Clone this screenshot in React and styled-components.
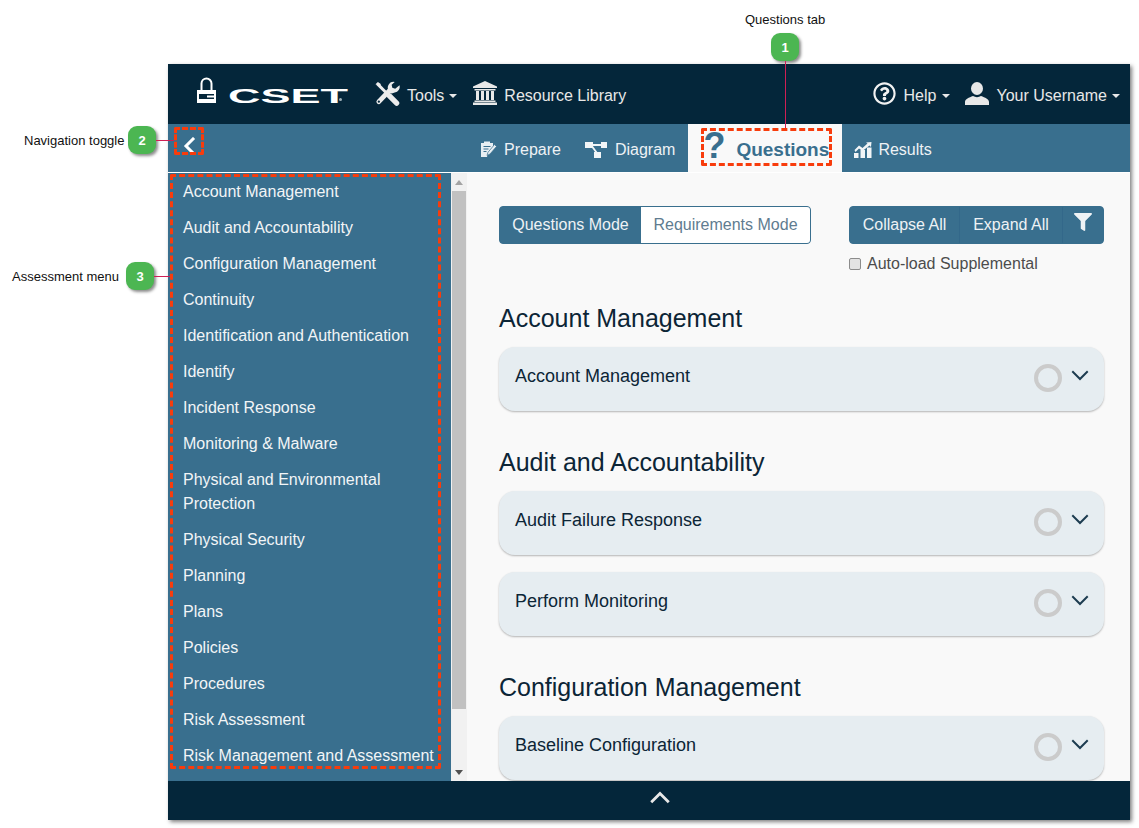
import React from 'react'
import styled, { createGlobalStyle } from 'styled-components'
import { FaRegQuestionCircle, FaFilter } from 'react-icons/fa'

const GlobalStyle = createGlobalStyle`
  html, body {
    margin: 0;
    padding: 0;
    background: #fff;
    font-family: "Liberation Sans", Arial, sans-serif;
  }
`

const navy = '#04263a'
const steel = '#396f8e'
const paper = '#f9f9f9'

const Page = styled.div`
  position: relative;
  width: 1139px;
  height: 828px;
  padding: 64px 9px 8px 168px;
  box-sizing: border-box;
  overflow: hidden;
`
const Frame = styled.div`
  display: flex;
  flex-direction: column;
  height: 756px;
  box-shadow: 2px 2px 4px rgba(0, 0, 0, .5);
`
const Header = styled.header`
  display: flex;
  align-items: center;
  height: 60px;
  flex: none;
  padding: 4px 10px 0 28px;
  box-sizing: border-box;
  background: ${navy};
  color: #e8e8e8;
  font-size: 16px;

  svg {
    margin-top: -6px;
  }
`
const Logo = styled.div`
  position: relative;
  display: flex;
  align-items: center;
  width: 179px;
  flex: none;
  color: #fff;

  svg {
    margin-top: -13px;
  }
`
const LogoWord = styled.span`
  display: inline-block;
  margin-left: 11px;
  font-size: 20px;
  line-height: 20px;
  font-weight: 700;
  transform: scale(2.25, 1);
  transform-origin: left center;
  white-space: nowrap;
`
const LogoDot = styled.i`
  position: absolute;
  left: 143px;
  top: 12px;
  width: 3px;
  height: 3px;
  border-radius: 50%;
  background: #9fb0ba;
`
const HeaderLink = styled.a`
  display: flex;
  align-items: center;
  gap: ${p => p.$gap || 7}px;
  margin-left: ${p => p.$left || 0}px;
  color: inherit;
  white-space: nowrap;
`
const Caret = styled.i`
  width: 0;
  height: 0;
  margin-left: -2px;
  border-left: 4.5px solid transparent;
  border-right: 4.5px solid transparent;
  border-top: 4.5px solid currentColor;
`
const Spacer = styled.div`
  flex: 1;
`
const TabBar = styled.nav`
  display: flex;
  height: 49px;
  flex: none;
  background: ${steel};
  color: #eef2f5;
  font-size: 16px;
`
const Toggle = styled.div`
  display: flex;
  align-items: center;
  width: 300px;
  flex: none;
  padding: 0 0 6px 14px;
  box-sizing: border-box;
`
const Tab = styled.a`
  display: flex;
  align-items: center;
  gap: ${p => p.$gap || 7}px;
  padding: 2px 12px 0;
  white-space: nowrap;
`
const ActiveTab = styled(Tab)`
  width: 154px;
  box-sizing: border-box;
  margin-left: 1px;
  padding: 2px 0 0 15px;
  gap: 11px;
  background: ${paper};
  color: ${steel};
  font-size: 19px;
  font-weight: 700;
`
const BigMark = styled.span`
  font-size: 36px;
  line-height: 36px;
  margin-top: -7px;
`
const Body = styled.div`
  display: flex;
  flex: 1;
  min-height: 0;
  border-top: 1px solid #fff;
  margin-top: -1px;
  background: ${paper};
`
const Sidebar = styled.aside`
  width: 283px;
  flex: none;
  overflow: hidden;
  background: ${steel};
`
const MenuItem = styled.div`
  padding: 7px 15px 5px;
  color: #f2f5f7;
  font-size: 16px;
  line-height: 24px;
`
const Scrollbar = styled.div`
  display: flex;
  flex-direction: column;
  align-items: center;
  width: 16px;
  flex: none;
  background: #f1f1f1;
`
const ScrollArrow = styled.i`
  width: 0;
  height: 0;
  margin: ${p => (p.$up ? '7px 0 6px' : '6px 0')};
  border-left: 4px solid transparent;
  border-right: 4px solid transparent;
  ${p => (p.$up ? 'border-bottom: 5px solid #a3a3a3;' : 'border-top: 5px solid #505050;')}
`
const ScrollThumb = styled.div`
  width: 14px;
  height: 518px;
  margin-bottom: auto;
  background: #c1c1c1;
`
const Main = styled.main`
  flex: 1;
  min-width: 0;
  overflow: hidden;
  padding: 33px 26px 0 32px;
`
const Toolbar = styled.div`
  display: flex;
  justify-content: space-between;
  align-items: flex-start;
`
const BtnGroup = styled.div`
  display: flex;
  height: 38px;
  border-radius: 4px;
  overflow: hidden;
  background: ${steel};
  border: 1px solid ${steel};
  box-sizing: border-box;
`
const Btn = styled.button`
  display: flex;
  align-items: center;
  justify-content: center;
  width: ${p => p.$w}px;
  padding: 0;
  border: 0;
  border-left: ${p => (p.$divider ? '1px solid #33688a' : '0')};
  background: ${p => (p.$outline ? '#fff' : steel)};
  color: ${p => (p.$outline ? '#5f7c90' : '#eef2f5')};
  font: 16px "Liberation Sans", Arial, sans-serif;
`
const FilterGlyph = styled(FaFilter)`
  margin-top: -7px;
`
const RightTools = styled.div`
  width: 255px;
`
const CheckRow = styled.label`
  display: flex;
  align-items: center;
  gap: 6px;
  height: 18px;
  margin-top: 11px;
  color: #4c4c4c;
  font-size: 16px;
  white-space: nowrap;
`
const Check = styled.input`
  appearance: none;
  width: 12px;
  height: 12px;
  margin: 0;
  border: 1px solid #8c8c8c;
  border-radius: 2px;
  background: #e3e3e3;
`
const Section = styled.section`
  margin-top: ${p => p.$top}px;
`
const Heading = styled.h2`
  margin: 0 0 14px;
  color: #0c2536;
  font-size: 25px;
  font-weight: 400;
  line-height: 30px;
`
const Panel = styled.div`
  display: flex;
  align-items: flex-start;
  height: 64px;
  margin-top: 17px;
  padding: 17px 15px 0 16px;
  box-sizing: border-box;
  border-radius: 16px;
  background: #e6edf1;
  box-shadow: 0 1px 2px rgba(0, 0, 0, .28);
  color: #0c2536;
  font-size: 18px;
  line-height: 24px;

  h2 + & {
    margin-top: 0;
  }

  svg {
    margin-top: 2px;
  }
`
const PanelTitle = styled.span`
  flex: 1;
`
const Ring = styled.i`
  width: 28px;
  height: 28px;
  margin-right: 9px;
  border: 4px solid #cbcbcb;
  border-radius: 50%;
  box-sizing: border-box;
`
const Footer = styled.footer`
  display: flex;
  align-items: center;
  justify-content: center;
  height: 39px;
  flex: none;
  padding: 0 0 5px 22px;
  box-sizing: border-box;
  background: ${navy};
`

/* annotation layer, drawn over the screenshot */
const Badge = styled.div`
  position: absolute;
  left: ${p => p.$x}px;
  top: ${p => p.$y}px;
  display: flex;
  align-items: center;
  justify-content: center;
  width: 28px;
  height: 28px;
  border-radius: 9px;
  background: #4cb652;
  box-shadow: 2px 2px 3px rgba(0, 0, 0, .45);
  color: #fff;
  font-size: 13px;
  font-weight: 700;
`
const Label = styled.span`
  position: absolute;
  left: ${p => p.$x}px;
  top: ${p => p.$y}px;
  color: #111;
  font-size: 13px;
  line-height: 14px;
  white-space: nowrap;
`
const Leader = styled.i`
  position: absolute;
  left: ${p => p.$x}px;
  top: ${p => p.$y}px;
  width: ${p => p.$w}px;
  height: ${p => p.$h}px;
  background: #cf1f55;
`
const Marker = styled.div`
  position: absolute;
  left: ${p => p.$x}px;
  top: ${p => p.$y}px;
  width: ${p => p.$w}px;
  height: ${p => p.$h}px;
  box-sizing: border-box;
  border: 3px dashed #f83c0c;
  border-radius: 2px;
`

const LockIcon = () => (
  <svg width="21" height="26" viewBox="0 0 21 26">
    <path d="M5.500 13V6.500a5 5 0 0 1 10 0V13" fill="none" stroke="#fff" strokeWidth="2" />
    <path fillRule="evenodd" fill="#fff" d="M1 13h19v13H1zM3 17v5h15v-1.500h-7v-2h7V17z" />
  </svg>
)
const ToolsIcon = () => (
  <svg width="25" height="25" viewBox="0 0 26 25">
    <path d="M2.500 2.500 14 14" fill="none" stroke="#ececec" strokeWidth="3" />
    <path d="M.5 3 3 .5l3 2-.5 3z" fill="#ececec" />
    <path d="M15 15l7.500 7.500" fill="none" stroke="#ececec" strokeWidth="5.500" strokeLinecap="round" />
    <path d="M4 21 15.500 9" fill="none" stroke="#ececec" strokeWidth="5" strokeLinecap="round" />
    <path fill="#ececec" d="M20.500.5a6 6 0 0 0-7 7.500L14 11.500l3.500 1 3-1a6 6 0 0 0 5-7.500l-4.500 3.500-3-1-.7-3z" />
    <circle cx="4" cy="21" r="1.200" fill="#04263a" />
  </svg>
)
const BankIcon = () => (
  <svg width="24" height="24" viewBox="0 0 24 24" fill="#e8e8e8">
    <path d="M12 0 24 5.500V7H0V5.500z" />
    <rect x="1.500" y="8" width="21" height="1.500" />
    <rect x="3" y="10" width="3" height="9" />
    <rect x="8" y="10" width="3" height="9" />
    <rect x="13" y="10" width="3" height="9" />
    <rect x="18" y="10" width="3" height="9" />
    <rect x="1.500" y="19.500" width="21" height="1.500" />
    <rect x="0" y="21.500" width="24" height="2.500" />
  </svg>
)
const UserIcon = () => (
  <svg width="24" height="23" viewBox="0 0 24 23" fill="#e8e8e8">
    <ellipse cx="12" cy="6.500" rx="6" ry="6.500" />
    <path d="M0 23v-3c0-3 4-4.500 8-6 2.500 1.500 5.500 1.500 8 0 4 1.500 8 3 8 6v3z" />
  </svg>
)
const PrepareIcon = () => (
  <svg width="17" height="17" viewBox="0 0 17 17">
    <path fill="#e8eff3" d="M1 2h3V.500h6V2h3v4l-5 6-1 4H1z" />
    <path fill="none" stroke="#396f8e" strokeWidth="1" d="M3.500 5.500h7M3.500 8h5M3.500 10.500h3" />
    <path fill="#e8eff3" stroke="#396f8e" strokeWidth=".7" d="M14.500 3.500 16.500 5.500 10 13l-3 1.500 1-3.200z" />
  </svg>
)
const DiagramIcon = () => (
  <svg width="22" height="17" viewBox="0 0 22 17" fill="#f2f5f7">
    <rect x="0" y="1" width="8" height="6" />
    <rect x="16" y="1" width="6" height="6" />
    <rect x="9" y="11" width="7" height="6" />
    <path d="M7 3h10v2H7zM6 5.500 7.500 4.500 13 12l-1.500 1z" />
  </svg>
)
const ResultsIcon = () => (
  <svg width="18" height="16" viewBox="0 0 18 16" fill="#f2f5f7">
    <rect x="0" y="11" width="4.500" height="5" />
    <rect x="6.500" y="8" width="4.500" height="8" />
    <rect x="13" y="5.500" width="4.500" height="10.500" />
    <path d="M.5 8 5 3.500l3.500 2.500 5-4.500-1.500-1L17.500 0l-.5 5-1.500-1.500-7 5.500L5 6.500 1.500 10z" />
  </svg>
)
const Chevron = ({ dir, size = 16, weight = 2, color = '#fff' }) => {
  const points = {
    left: '11,2 4,9 11,16',
    up: '2,12 9,5 16,12',
    down: '2,6 9,13 16,6'
  }
  return (
    <svg width={size} height={size} viewBox="0 0 18 18">
      <polyline points={points[dir]} fill="none" stroke={color} strokeWidth={weight} strokeLinecap="square" />
    </svg>
  )
}

const menu = [
  'Account Management',
  'Audit and Accountability',
  'Configuration Management',
  'Continuity',
  'Identification and Authentication',
  'Identify',
  'Incident Response',
  'Monitoring & Malware',
  'Physical and Environmental Protection',
  'Physical Security',
  'Planning',
  'Plans',
  'Policies',
  'Procedures',
  'Risk Assessment',
  'Risk Management and Assessment'
]

const sections = [
  { title: 'Account Management', top: 30, panels: ['Account Management'] },
  { title: 'Audit and Accountability', top: 36, panels: ['Audit Failure Response', 'Perform Monitoring'] },
  { title: 'Configuration Management', top: 36, panels: ['Baseline Configuration'] }
]

const App = () => (
  <Page>
    <GlobalStyle />
    <Frame>
      <Header>
        <Logo>
          <LockIcon />
          <LogoWord>CSET</LogoWord>
          <LogoDot />
        </Logo>
        <HeaderLink>
          <ToolsIcon />
          Tools
          <Caret />
        </HeaderLink>
        <HeaderLink $left={16}>
          <BankIcon />
          Resource Library
        </HeaderLink>
        <Spacer />
        <HeaderLink $gap={8}>
          <FaRegQuestionCircle size={23} color="#f2f2f2" />
          Help
          <Caret />
        </HeaderLink>
        <HeaderLink $left={15}>
          <UserIcon />
          Your Username
          <Caret />
        </HeaderLink>
      </Header>
      <TabBar>
        <Toggle><Chevron dir="left" size={18} weight={3} /></Toggle>
        <Tab><PrepareIcon />Prepare</Tab>
        <Tab $gap={8}><DiagramIcon />Diagram</Tab>
        <ActiveTab><BigMark>?</BigMark>Questions</ActiveTab>
        <Tab $gap={6}><ResultsIcon />Results</Tab>
      </TabBar>
      <Body>
        <Sidebar>
          {menu.map(item => <MenuItem key={item}>{item}</MenuItem>)}
        </Sidebar>
        <Scrollbar>
          <ScrollArrow $up />
          <ScrollThumb />
          <ScrollArrow />
        </Scrollbar>
        <Main>
          <Toolbar>
            <BtnGroup>
              <Btn $w={141}>Questions Mode</Btn>
              <Btn $w={169} $outline>Requirements Mode</Btn>
            </BtnGroup>
            <RightTools>
              <BtnGroup>
                <Btn $w={109}>Collapse All</Btn>
                <Btn $w={103} $divider>Expand All</Btn>
                <Btn $w={41} $divider><FilterGlyph size={18} /></Btn>
              </BtnGroup>
              <CheckRow>
                <Check type="checkbox" />
                Auto-load Supplemental
              </CheckRow>
            </RightTools>
          </Toolbar>
          {sections.map(section => (
            <Section key={section.title} $top={section.top}>
              <Heading>{section.title}</Heading>
              {section.panels.map(panel => (
                <Panel key={panel}>
                  <PanelTitle>{panel}</PanelTitle>
                  <Ring />
                  <Chevron dir="down" size={18} weight={2} color="#1d3c50" />
                </Panel>
              ))}
            </Section>
          ))}
        </Main>
      </Body>
      <Footer><Chevron dir="up" size={20} weight={2.5} color="#e8e8e8" /></Footer>
    </Frame>

    <Label $x={745} $y={13}>Questions tab</Label>
    <Badge $x={771} $y={33}>1</Badge>
    <Leader $x={785} $y={61} $w={1} $h={68} />
    <Marker $x={701} $y={128} $w={131} $h={38} />

    <Label $x={24} $y={134}>Navigation toggle</Label>
    <Badge $x={128} $y={126}>2</Badge>
    <Leader $x={156} $y={140} $w={18} $h={1} />
    <Marker $x={174} $y={127} $w={30} $h={28} />

    <Label $x={12} $y={270}>Assessment menu</Label>
    <Badge $x={126} $y={262}>3</Badge>
    <Leader $x={154} $y={276} $w={16} $h={1} />
    <Marker $x={170} $y={174} $w={271} $h={595} />
  </Page>
)

export default App
